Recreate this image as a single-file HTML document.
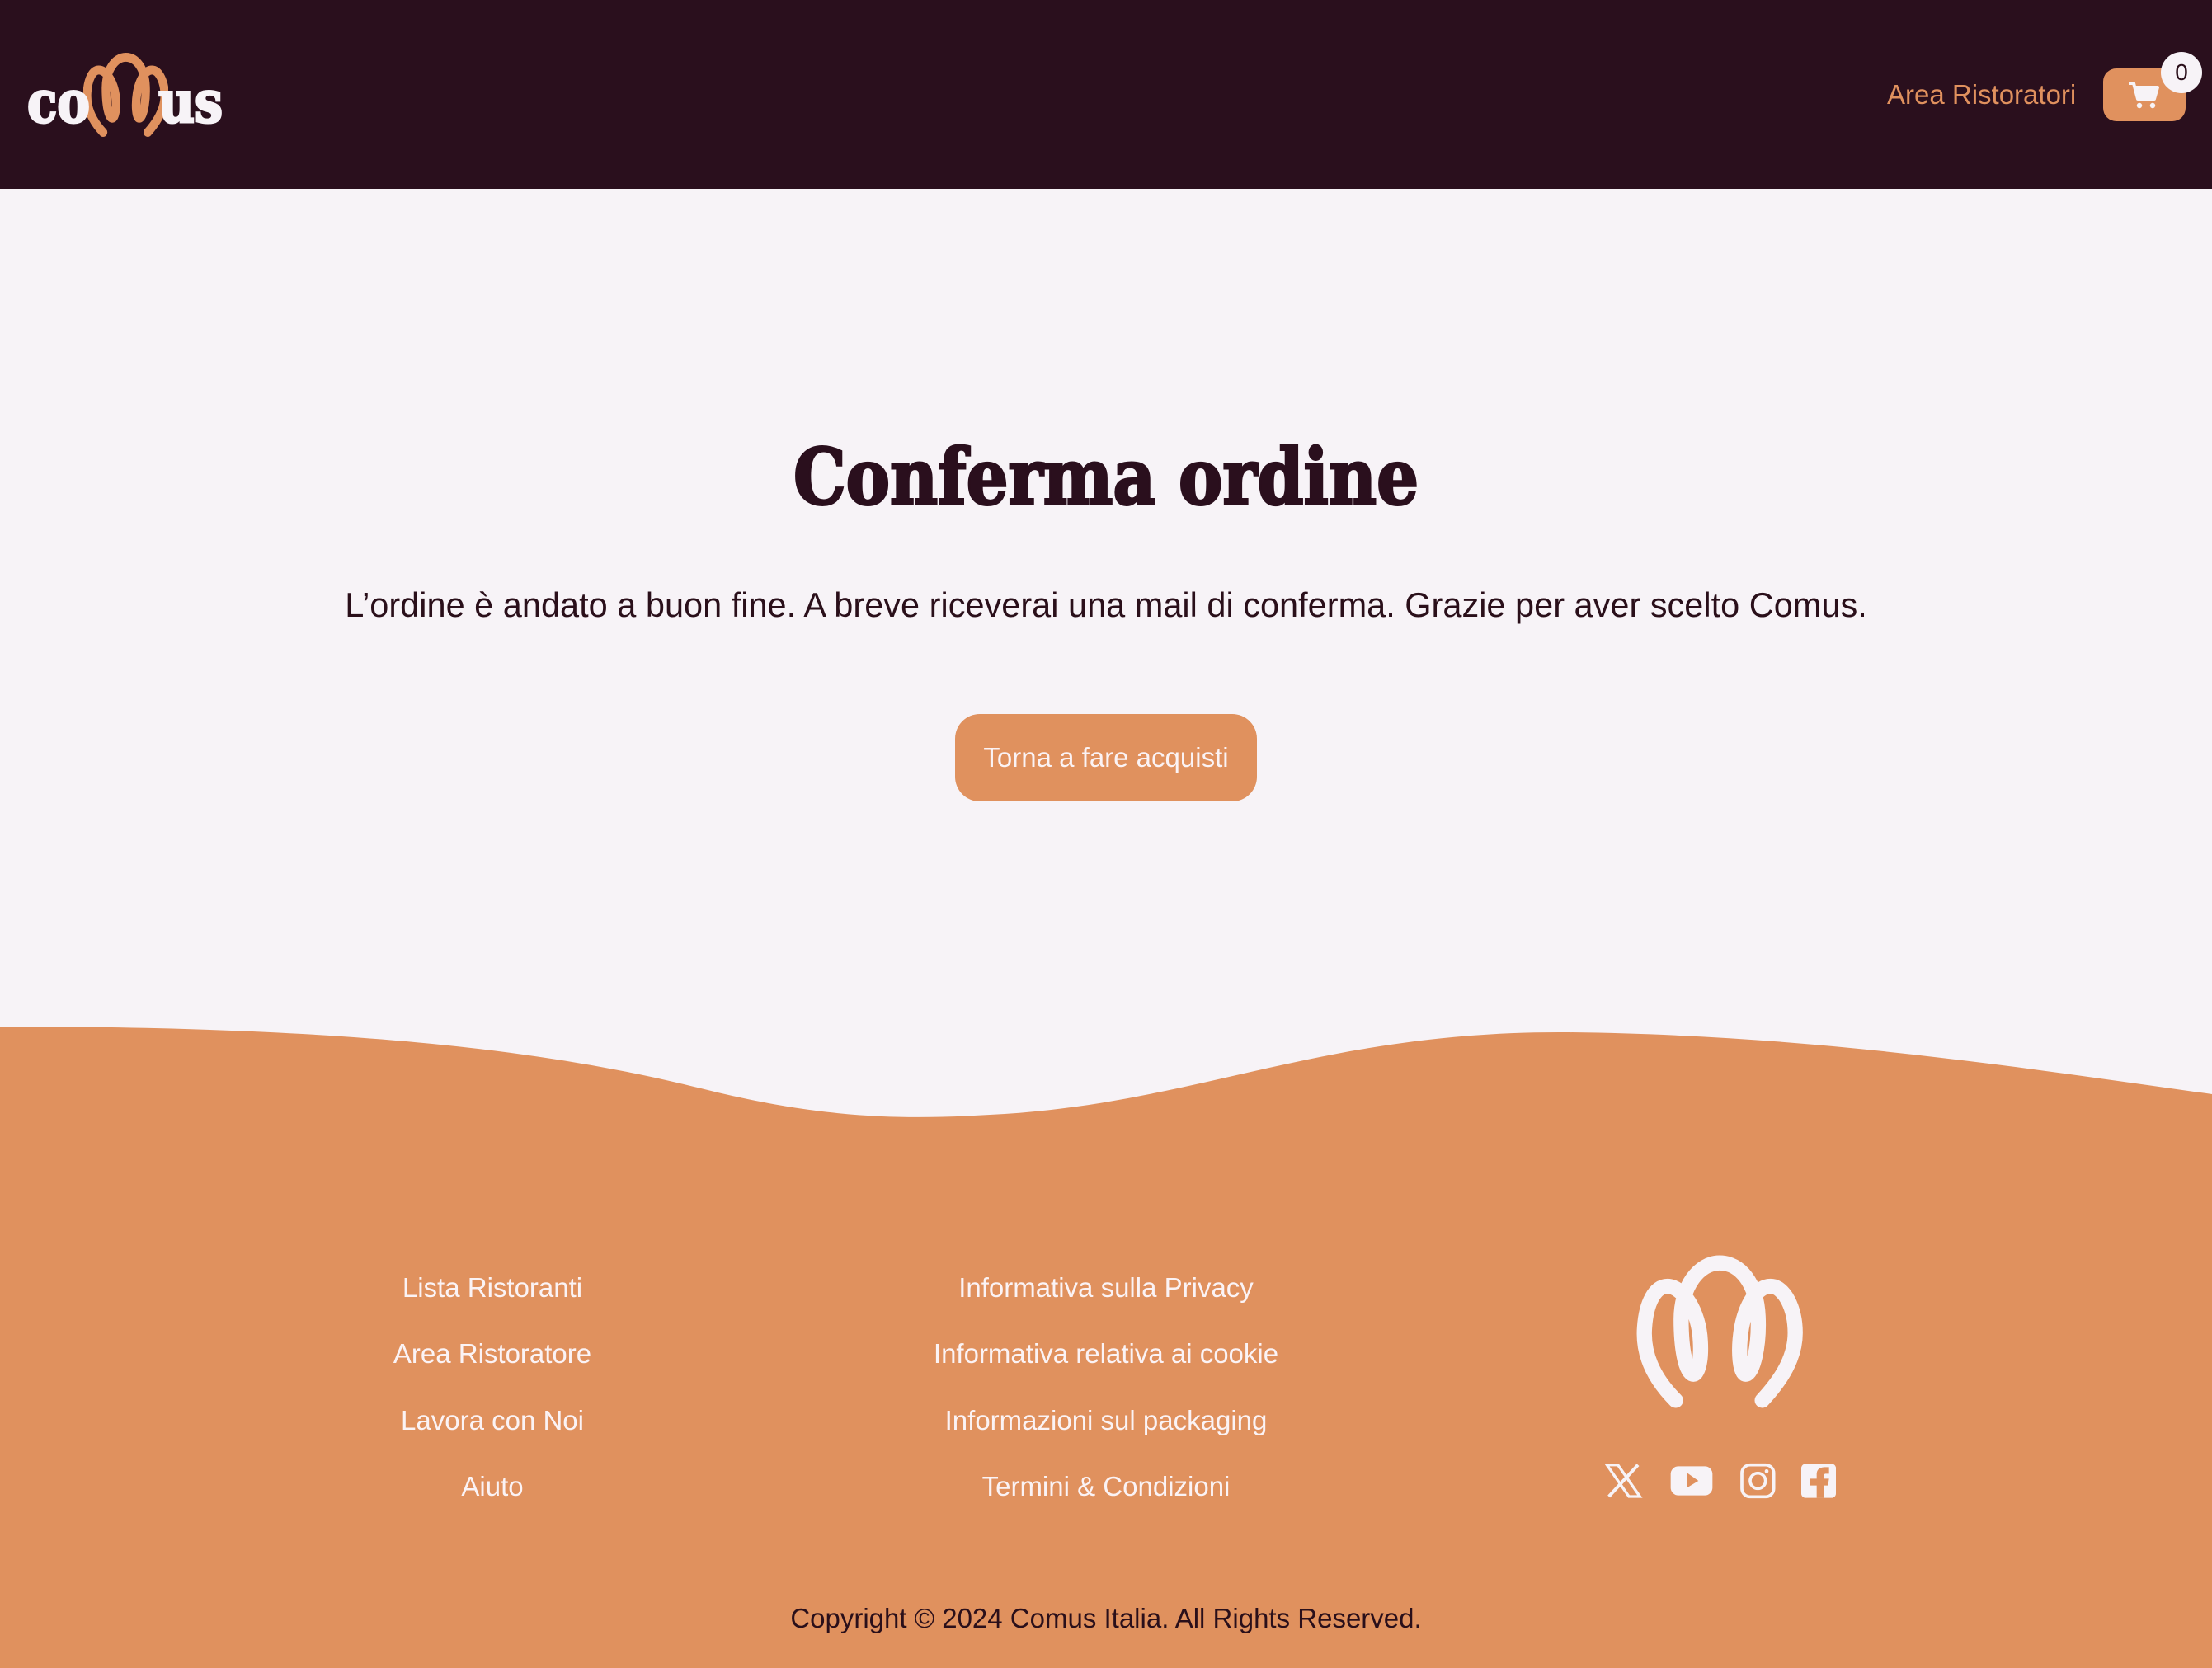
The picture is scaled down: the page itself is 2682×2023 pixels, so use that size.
<!DOCTYPE html>
<html><head><meta charset="utf-8"><style>
*{margin:0;padding:0;box-sizing:border-box}
body{width:2682px;height:2023px;background:#f7f3f7;font-family:"Liberation Sans",sans-serif;position:relative;overflow:hidden;color:#2a0f1a}
.hdr{position:absolute;left:0;top:0;width:2682px;height:229px;background:#2a0f1d}
.abs{position:absolute}
.t{position:absolute;white-space:nowrap;transform:translateX(-50%)}
.fl{color:#fbf3f5;font-size:33px}
</style></head><body>
<div class="hdr"></div>
<svg class="abs" style="left:0;top:40px" width="300" height="150" viewBox="0 0 300 150">
<svg x="101" y="24" width="103" height="102" viewBox="195 65 600 560" preserveAspectRatio="none">
<path d="M335,595 C250,510 215,420 222,330 C228,240 260,180 305,180 C360,180 420,270 425,380 C430,470 410,500 400,500 C375,500 355,420 355,300 C355,180 420,95 495,95 C570,95 630,170 635,290 C640,400 615,500 590,500 C570,500 560,420 575,330 C590,250 630,180 680,180 C730,180 770,260 770,350 C770,440 720,520 650,595" fill="none" stroke="#e0915e" stroke-width="60" stroke-linecap="round"/>
</svg>
<text x="33" y="108" font-family="DejaVu Serif" font-weight="bold" font-size="70" fill="#f7f3f7" stroke="#f7f3f7" stroke-width="3" textLength="76" lengthAdjust="spacingAndGlyphs">co</text>
<text x="192" y="108" font-family="DejaVu Serif" font-weight="bold" font-size="70" fill="#f7f3f7" stroke="#f7f3f7" stroke-width="3" textLength="78" lengthAdjust="spacingAndGlyphs">us</text>
</svg>
<div class="abs" style="left:2288px;top:96px;font-size:33px;color:#e0915e">Area Ristoratori</div>
<div class="abs" style="left:2550px;top:83px;width:100px;height:64px;background:#e0915e;border-radius:16px"></div>
<svg class="abs" style="left:2580px;top:98px" width="40" height="34" viewBox="0 0 40 34">
<path d="M1,3 H7 L12,22 H32 L36,8 H9" fill="none" stroke="#f7f3f7" stroke-width="4" stroke-linejoin="round"/>
<path d="M10,8 H36 L32,20 H13Z" fill="#f7f3f7"/>
<circle cx="14" cy="30" r="3.2" fill="#f7f3f7"/><circle cx="30" cy="30" r="3.2" fill="#f7f3f7"/>
</svg>
<div class="abs" style="left:2620px;top:63px;width:50px;height:50px;border-radius:50%;background:#f7f3f7;text-align:center;line-height:50px;font-size:28px;color:#2a0f1a">0</div>

<svg class="abs" style="left:0;top:500px" width="2682" height="180">
<text x="1341" y="111" text-anchor="middle" font-family="DejaVu Serif" font-weight="bold" font-size="94" fill="#2a0f1d" stroke="#2a0f1d" stroke-width="3" textLength="758" lengthAdjust="spacingAndGlyphs">Conferma ordine</text>
</svg>
<div class="t" style="left:1341px;top:710px;font-size:41.5px;color:#2a0f1a">L’ordine è andato a buon fine. A breve riceverai una mail di conferma. Grazie per aver scelto Comus.</div>
<div class="abs" style="left:1158px;top:866px;width:366px;height:106px;border-radius:30px;background:#e0915e;color:#fbf3f5;font-size:33px;text-align:center;line-height:106px">Torna a fare acquisti</div>

<svg class="abs" style="left:0;top:1200px" width="2682" height="823" viewBox="0 0 2682 823">
<path d="M0,45 C400,45 650,70 850,120 C1000,158 1100,158 1200,152 C1450,140 1600,50 1900,52 C2200,55 2450,95 2682,127 V823 H0Z" fill="#e0915e"/>
</svg>

<div class="t fl" style="left:597px;top:1543px">Lista Ristoranti</div>
<div class="t fl" style="left:597px;top:1623px">Area Ristoratore</div>
<div class="t fl" style="left:597px;top:1704px">Lavora con Noi</div>
<div class="t fl" style="left:597px;top:1784px">Aiuto</div>
<div class="t fl" style="left:1341px;top:1543px">Informativa sulla Privacy</div>
<div class="t fl" style="left:1341px;top:1623px">Informativa relativa ai cookie</div>
<div class="t fl" style="left:1341px;top:1704px">Informazioni sul packaging</div>
<div class="t fl" style="left:1341px;top:1784px">Termini &amp; Condizioni</div>

<svg class="abs" style="left:1920px;top:1500px" width="320" height="340" viewBox="0 0 960 1020">
<path d="M335,595 C250,510 215,420 222,330 C228,240 260,180 305,180 C360,180 420,270 425,380 C430,470 410,500 400,500 C375,500 355,420 355,300 C355,180 420,95 495,95 C570,95 630,170 635,290 C640,400 615,500 590,500 C570,500 560,420 575,330 C590,250 630,180 680,180 C730,180 770,260 770,350 C770,440 720,520 650,595" fill="none" stroke="#f7f3f7" stroke-width="55" stroke-linecap="round"/>
<path d="M85,830 H125 L205,945 H165Z" fill="none" stroke="#f7f3f7" stroke-width="10"/>
<path d="M198,830 L92,945" stroke="#f7f3f7" stroke-width="12"/>
<rect x="317" y="835" width="152" height="106" rx="28" fill="#f7f3f7"/>
<path d="M378,860 L418,888 L378,912Z" fill="#e0915e"/>
<rect x="576" y="830" width="116" height="116" rx="30" fill="none" stroke="#f7f3f7" stroke-width="11"/>
<circle cx="634" cy="888" r="28" fill="none" stroke="#f7f3f7" stroke-width="11"/>
<circle cx="666" cy="853" r="7" fill="#f7f3f7"/>
<rect x="792" y="826" width="126" height="124" rx="16" fill="#f7f3f7"/>
<path d="M848,950 V905 H825 V880 H848 V865 C848,845 860,838 880,838 H893 V862 H882 C875,862 873,866 873,872 V880 H893 L889,905 H873 V950Z" fill="#e0915e"/>
</svg>

<div class="t" style="left:1341px;top:1944px;font-size:33px;color:#2a0f1a">Copyright © 2024 Comus Italia. All Rights Reserved.</div>
</body></html>
